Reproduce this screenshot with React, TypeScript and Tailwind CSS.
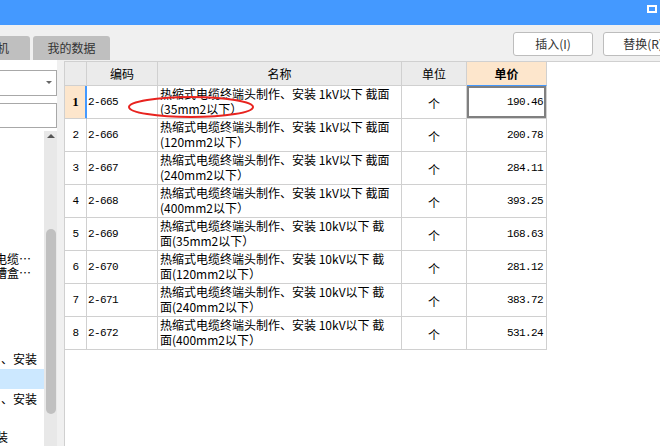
const rows = [
  { code: "2-665", l1: "热缩式电缆终端头制作、安装 1kV以下 截面", l2: "(35mm2以下）", price: "190.46" },
  { code: "2-666", l1: "热缩式电缆终端头制作、安装 1kV以下 截面", l2: "(120mm2以下）", price: "200.78" },
  { code: "2-667", l1: "热缩式电缆终端头制作、安装 1kV以下 截面", l2: "(240mm2以下）", price: "284.11" },
  { code: "2-668", l1: "热缩式电缆终端头制作、安装 1kV以下 截面", l2: "(400mm2以下）", price: "393.25" },
  { code: "2-669", l1: "热缩式电缆终端头制作、安装 10kV以下 截", l2: "面(35mm2以下）", price: "168.63" },
  { code: "2-670", l1: "热缩式电缆终端头制作、安装 10kV以下 截", l2: "面(120mm2以下）", price: "281.12" },
  { code: "2-671", l1: "热缩式电缆终端头制作、安装 10kV以下 截", l2: "面(240mm2以下）", price: "383.72" },
  { code: "2-672", l1: "热缩式电缆终端头制作、安装 10kV以下 截", l2: "面(400mm2以下）", price: "531.24" },
];

const mono = "font-['Liberation_Mono',monospace] text-[11px] tracking-[-0.6px]";

function TitleBar() {
  return (
    <div className="h-[25px] bg-[#4499ff] flex justify-end pr-[3px] pt-[5px]">
      <div className="w-[10px] h-[8px] border-2 border-white" />
    </div>
  );
}

function Toolbar() {
  return (
    <div className="h-[35px] flex justify-between overflow-hidden">
      <div className="flex items-end gap-[3px] text-[12px] text-[#333]">
        <div className="w-[30px] h-[24px] bg-[#bfbfbf] rounded-tr-[3px] flex items-center overflow-hidden">
          <span className="ml-[-3px]">机</span>
        </div>
        <div className="w-[77px] h-[24px] bg-[#bfbfbf] rounded-t-[3px] flex items-center justify-center">
          我的数据
        </div>
      </div>
      <div className="flex gap-[10px] mt-[7px] mr-[-23px] text-[12px] text-[#333]">
        <button className="w-[80px] h-[24px] bg-white border border-[#bdbdbd] rounded-[3px]">插入(I)</button>
        <button className="w-[80px] h-[24px] bg-white border border-[#bdbdbd] rounded-[3px]">替换(R)</button>
      </div>
    </div>
  );
}

function LeftPanel() {
  return (
    <div className="w-[57px] bg-white flex flex-col overflow-hidden text-[12px] text-black">
      <div className="mt-[10px] ml-[-1px] h-[26px] border border-[#a8a8a8] flex items-center justify-end pr-[4px]">
        <div className="w-0 h-0 border-l-[3px] border-r-[3px] border-t-[3px] border-l-transparent border-r-transparent border-t-[#666]" />
      </div>
      <div className="mt-[7px] ml-[-1px] h-[26px] border border-[#a8a8a8]" />
      <div className="flex flex-1 mt-[3px]">
        <div className="w-[44px] flex flex-col">
          <div className="h-[121px]" />
          <div className="leading-[14px] whitespace-nowrap ml-[-5px]">电缆…</div>
          <div className="leading-[14px] whitespace-nowrap ml-[-5px]">槽盒…</div>
          <div className="h-[69px]" />
          <div className="h-[20px] flex items-center whitespace-nowrap ml-[1px]">、安装</div>
          <div className="h-[20px] bg-[#cce8ff]" />
          <div className="h-[19px] flex items-center whitespace-nowrap ml-[1px]">、安装</div>
          <div className="h-[19px]" />
          <div className="h-[19px] flex items-center whitespace-nowrap ml-[-4px]">装</div>
        </div>
        <div className="w-[13px] bg-[#e8e8e8] flex flex-col items-center">
          <div className="mt-[3px] w-0 h-0 border-l-[4px] border-r-[4px] border-b-[4px] border-l-transparent border-r-transparent border-b-[#555]" />
          <div className="mt-[91px] w-[10px] h-[185px] rounded-full bg-[#c0c0c0]" />
        </div>
      </div>
    </div>
  );
}

function Grid() {
  return (
    <div className="flex-1 bg-white border-l border-t border-[#d0d0d0] mt-[1px] text-[12px] text-black">
      <div className="flex h-[24px] w-[482px]">
        <div className="w-[22px] bg-[#ebebeb] border-r border-b border-[#d0d0d0]" />
        <div className="w-[71px] bg-[#ebebeb] border-r border-b border-[#d0d0d0] flex items-center justify-center">编码</div>
        <div className="w-[244px] bg-[#ebebeb] border-r border-b border-[#d0d0d0] flex items-center justify-center">名称</div>
        <div className="w-[65px] bg-[#ebebeb] border-r border-b border-[#d0d0d0] flex items-center justify-center">单位</div>
        <div className="w-[80px] bg-[#fde6cc] border-r border-[#d0d0d0] border-b border-b-[#4499ff] flex items-center justify-center font-bold">单价</div>
      </div>
      {rows.map((r, i) => {
        const sel = i === 0;
        return (
          <div key={r.code} className="flex h-[33px] w-[482px]">
            <div
              className={
                sel
                  ? "w-[22px] bg-[#fde6cc] border-b border-[#d0d0d0] border-r border-r-[#4499ff] shadow-[inset_-1px_0_0_#4499ff] flex items-center justify-center font-bold font-['Liberation_Serif',serif] text-[13px]"
                  : "w-[22px] border-r border-b border-[#d0d0d0] flex items-center justify-center " + mono
              }
            >
              {i + 1}
            </div>
            <div className={"w-[71px] border-r border-b border-[#d0d0d0] flex items-center pl-[1px] " + mono}>{r.code}</div>
            <div className="w-[244px] border-r border-b border-[#d0d0d0] pl-[2px] leading-[15px] whitespace-nowrap overflow-hidden">
              <div>{r.l1}</div>
              <div>{r.l2}</div>
            </div>
            <div className="w-[65px] border-r border-b border-[#d0d0d0] flex items-center justify-center pt-[3px]">个</div>
            <div
              className={
                "w-[80px] border-r border-b border-[#d0d0d0] flex items-center justify-end pr-[3px] " +
                mono +
                (sel ? " shadow-[inset_0_0_0_2px_#808080]" : "")
              }
            >
              {r.price}
            </div>
          </div>
        );
      })}
    </div>
  );
}

export default function App() {
  return (
    <div className="relative w-[660px] h-[446px] overflow-hidden bg-[#f0f0f0] font-['Noto_Sans_CJK_SC',sans-serif] flex flex-col">
      <TitleBar />
      <Toolbar />
      <div className="flex flex-1 min-h-0">
        <LeftPanel />
        <div className="w-[7px]" />
        <Grid />
      </div>
      <svg className="absolute left-[126px] top-[95px]" width="130" height="26" viewBox="0 0 130 26">
        <ellipse cx="65" cy="12" rx="62" ry="10" fill="none" stroke="#e8231f" strokeWidth="2" />
      </svg>
    </div>
  );
}
